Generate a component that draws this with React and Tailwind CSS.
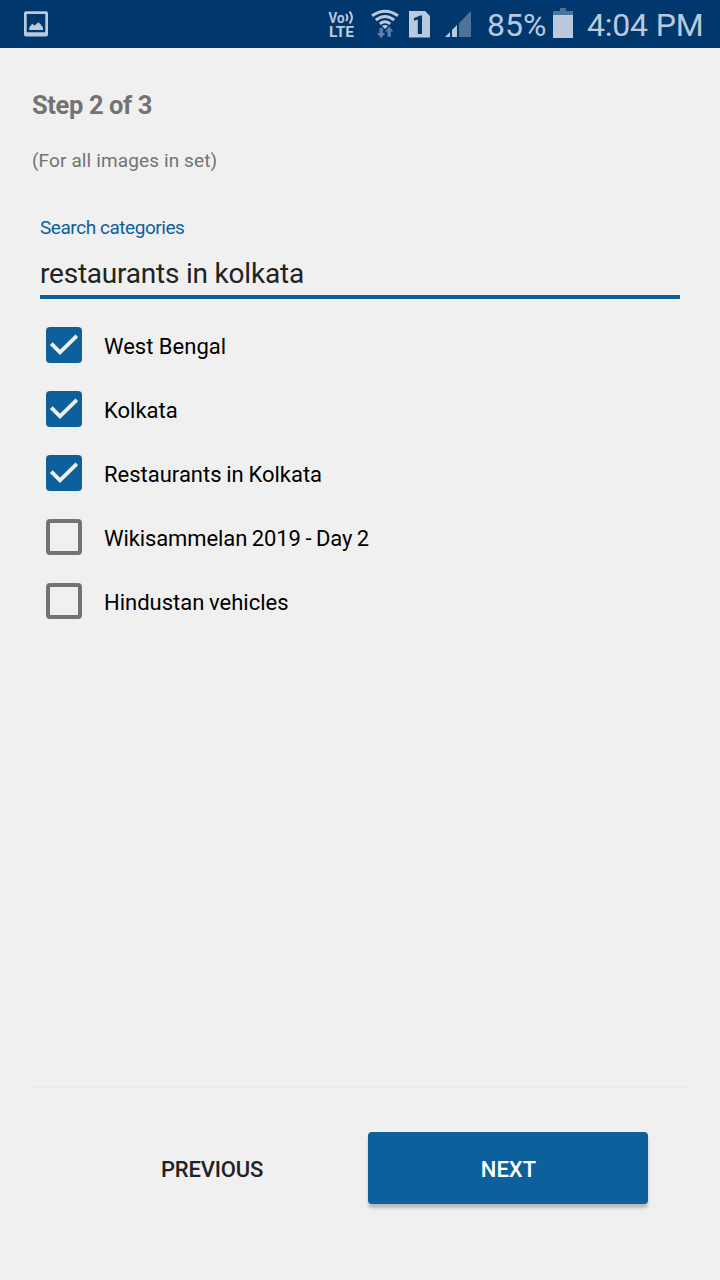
const categories = [
  { name: 'West Bengal', checked: true, spacing: '' },
  { name: 'Kolkata', checked: true, spacing: '' },
  { name: 'Restaurants in Kolkata', checked: true, spacing: '[word-spacing:-0.8px]' },
  { name: 'Wikisammelan 2019 - Day 2', checked: false, spacing: 'tracking-[-0.1px] [word-spacing:-0.8px]' },
  { name: 'Hindustan vehicles', checked: false, spacing: '[word-spacing:-0.8px]' },
];

function PictureIcon() {
  return (
    <svg className="h-12 w-6 shrink-0" viewBox="0 0 24 48" fill="none">
      <path fillRule="evenodd" d="M2 11.300h20q2 0 2 2v21.200q0 2-2 2H2q-2 0-2-2V13.300q0-2 2-2zM2.700 14v18.300h18.600V14z" fill="#bbc9dc" />
      <path d="M5.300 30v-2.600l2.800-3.600 2.600 1.600 3.600-3.200 2.200 2 2.500 3.200V30z" fill="#bbc9dc" />
    </svg>
  );
}

function VolteIcon() {
  return (
    <svg className="h-12 w-[27px] shrink-0" viewBox="0 0 27 48" fill="#bbc9dc">
      <text fontSize="14" fontWeight="700">
        <tspan x="0.500" y="23" textLength="16" lengthAdjust="spacingAndGlyphs">Vo</tspan>
        <tspan x="1" y="37.300" fontSize="15" textLength="25" lengthAdjust="spacingAndGlyphs">LTE</tspan>
      </text>
      <path d="M18 14q2.800 3.500 0 7M21.500 11.500q5 6 0 12" fill="none" stroke="#bbc9dc" strokeWidth="2" />
    </svg>
  );
}

function WifiIcon() {
  return (
    <svg className="ml-4 h-12 w-7 shrink-0" viewBox="0 0 28 48" fill="none">
      <g stroke="#bbc9dc" strokeWidth="2.900">
        <path d="M1 15.800Q14 6.500 27 15.800" />
        <path d="M4.800 20Q14 13 23.200 20" />
        <path d="M8.800 23.800Q14 19.800 19.200 23.800" />
      </g>
      <path d="M8.500 28h3.400v5h2.300L10.200 38.300 5.800 33h2.700zM16.500 36.700h3.400V31.500h2.400L18.200 26.500 14 31.500h2.500z" fill="#5b7fa6" />
      <path d="M11 26Q14 23.800 17 26L14 29z" fill="#bbc9dc" />
    </svg>
  );
}

function SimIcon() {
  return (
    <svg className="ml-2.5 h-12 w-[21px] shrink-0" viewBox="0 0 21 48">
      <path d="M0 11h16l5 5v21.500H0z" fill="#bbc9dc" />
      <path d="M8.800 34V19.600L5 20.800v-2.900l6.500-2.500H13V34z" fill="#00376d" />
    </svg>
  );
}

function SignalIcon() {
  return (
    <svg className="ml-[15px] h-12 w-[26px] shrink-0" viewBox="0 0 26 48">
      <path d="M0 37l5-5v5zM7 30l5-5v12H7z" fill="#bbc9dc" />
      <path d="M14 23L26 11v26H14z" fill="#4d7399" />
    </svg>
  );
}

function BatteryIcon() {
  return (
    <svg className="ml-2 h-12 w-5 shrink-0" viewBox="0 0 20 48">
      <path d="M0 11h7V8h6v3h7v4H0z" fill="#4d7399" />
      <path d="M0 15h20v23H0z" fill="#bbc9dc" />
    </svg>
  );
}

function StatusBar() {
  return (
    <header className="flex h-12 shrink-0 items-center bg-[#00376d] pl-6 text-[#bbc9dc]">
      <PictureIcon />
      <div className="ml-[280px] flex h-12 items-center">
        <VolteIcon />
        <WifiIcon />
        <SimIcon />
        <SignalIcon />
        <span className="ml-4 w-[58px] pt-0.5 whitespace-nowrap text-[32px] leading-[48px]">85%</span>
        <BatteryIcon />
        <span className="ml-3.5 pt-0.5 whitespace-nowrap text-[32px] leading-[48px] tracking-[-0.2px]">4:04 PM</span>
      </div>
    </header>
  );
}

function Category({ name, checked, spacing }) {
  return (
    <li className="flex h-16 items-center">
      <span
        className={
          checked
            ? 'flex size-9 items-center justify-center rounded-[4px] bg-[#0c609c]'
            : 'size-9 rounded-[4px] border-4 border-[#737373]'
        }
      >
        {checked && (
          <svg className="size-9" viewBox="0 0 36 36" fill="none" stroke="#f0f0f0" strokeWidth="3.800">
            <path d="M5.300 16.700L14 25.400 30.800 8.800" />
          </svg>
        )}
      </span>
      <span className={`ml-[22px] pt-[3px] text-[22px] leading-8 text-black ${spacing}`}>{name}</span>
    </li>
  );
}

export default function App() {
  return (
    <div className="flex h-[1280px] w-[720px] flex-col overflow-hidden bg-[#f0f0f0] font-['Roboto',sans-serif]">
      <StatusBar />
      <main className="flex flex-1 flex-col px-8">
        <h1 className="mt-[39px] text-[25.500px] leading-9 font-bold tracking-[-0.38px] text-[#737373]">Step 2 of 3</h1>
        <p className="mt-[26px] text-[19px] leading-6 tracking-[0.12px] text-[#737373]">(For all images in set)</p>
        <div className="mx-2 mt-[43px] border-b-4 border-[#0c609c]">
          <label className="block text-[19px] leading-6 tracking-[-0.45px] text-[#0c609c]">Search categories</label>
          <div className="mt-[17px] h-[38px] text-[28px] leading-[34px] tracking-[-0.21px] text-[#222]">restaurants in kolkata</div>
        </div>
        <ul className="mt-[14px] pl-3.5">
          {categories.map((category) => (
            <Category key={category.name} {...category} />
          ))}
        </ul>
      </main>
      <footer className="mx-8 flex h-[194px] shrink-0 items-start border-t-2 border-[#e9e9e9] pt-11 pr-10">
        <button className="ml-10 h-[72px] w-[280px] pt-0.5 text-[22px] font-medium tracking-[-0.2px] text-[#222]">PREVIOUS</button>
        <button className="ml-4 h-[72px] w-[280px] rounded-[4px] bg-[#0c609c] pt-0.5 pl-px text-[22px] font-medium text-white shadow-[0_4px_3px_rgba(0,0,0,0.22)]">
          NEXT
        </button>
      </footer>
    </div>
  );
}
